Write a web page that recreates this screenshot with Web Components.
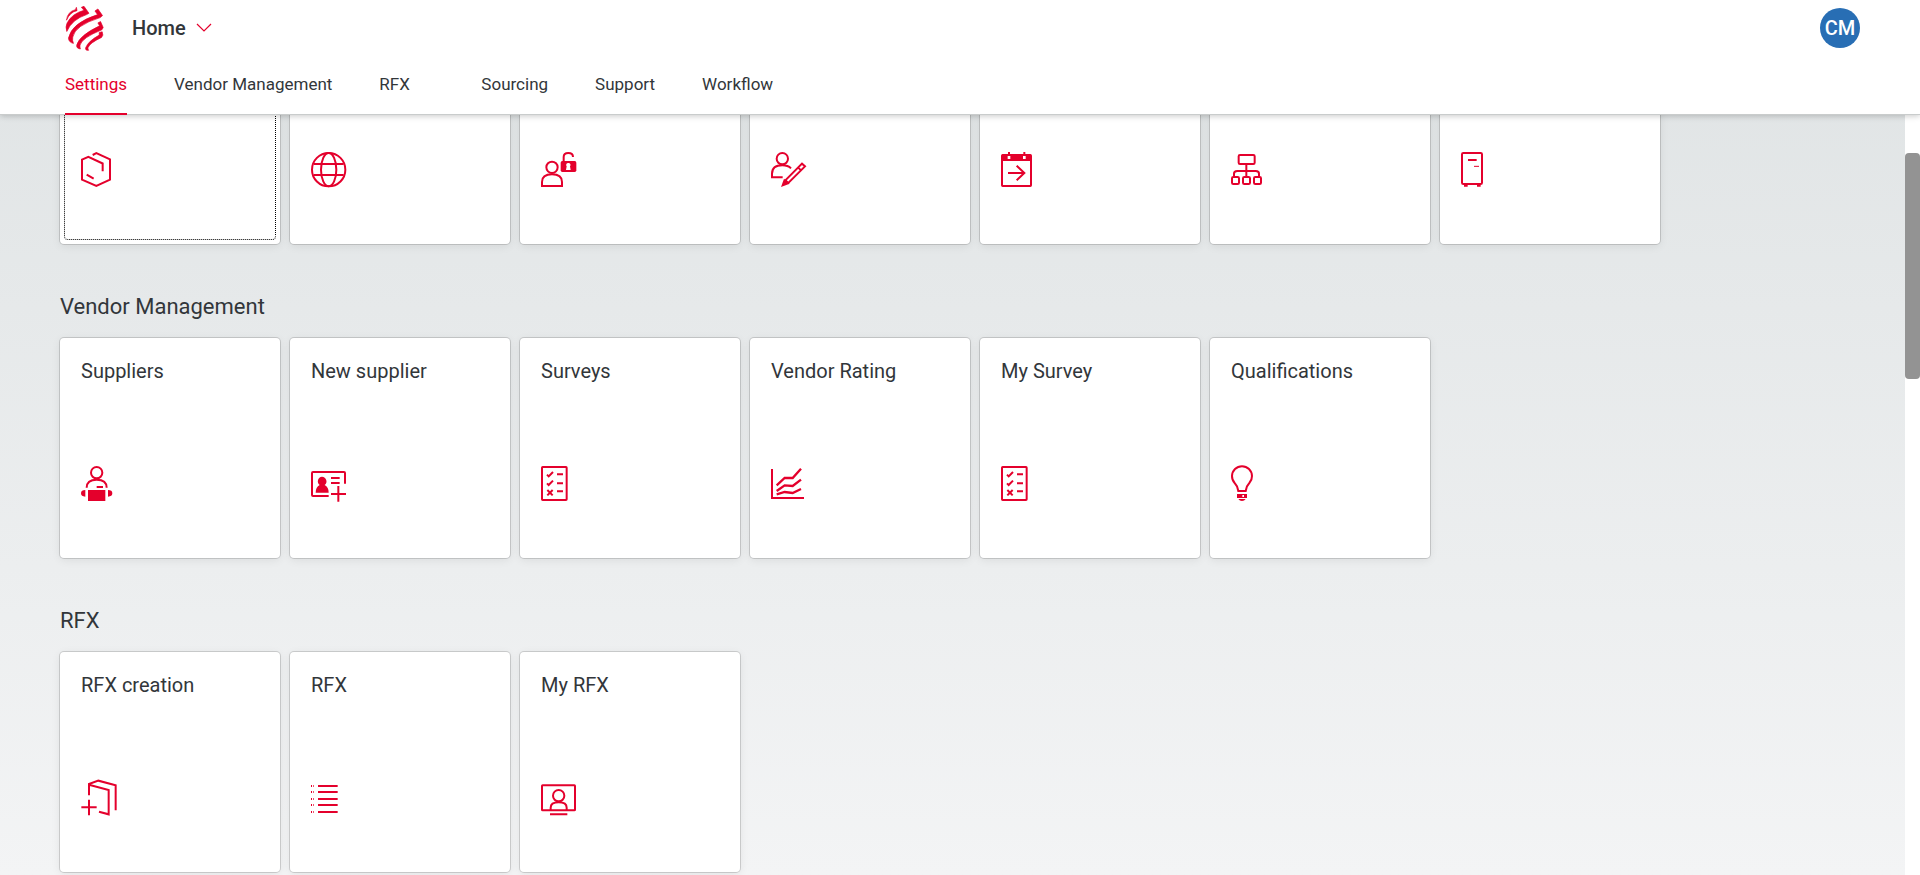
<!DOCTYPE html>
<html lang="en">
<head>
<meta charset="utf-8">
<title>Home</title>
<style>
  html, body { margin: 0; height: 100%; }
  body { font-family: Roboto, "Liberation Sans", sans-serif; color: #32363a; --brand: #e4002c; }
</style>
</head>
<body>
<launch-page></launch-page>

<script>
const define = (name, html, setup) => {
  const template = document.createElement('template');
  template.innerHTML = html;
  customElements.define(name, class extends HTMLElement {
    constructor() {
      super();
      this.attachShadow({ mode: 'open' }).append(template.content.cloneNode(true));
    }
    connectedCallback() { if (setup) setup(this, this.shadowRoot); }
  });
};

// Icons share a 105-unit square; strokes default to the brand colour.
const person = (x, y) => `<circle cx="${x}" cy="${y}" r="17"/>`;
const checklist = `<rect x="3" y="3" width="74" height="99" rx="2"/>
  <path d="M18 26l5 5L36 18M18 52l5 5L36 44M19 72l16 16M35 72L19 88M48 25h18M48 52h18M48 76h18"/>`;
const icons = {
  product: `<path d="M35 9L46 3.500l41 18.500v61L46 102 3 83V23l19-8.500 43 20V58M17 68l21 12"/>`,
  globe: `<circle cx="53" cy="53" r="50"/><ellipse cx="53" cy="53" rx="23" ry="50"/><path d="M8 36h90M8 69h90"/>`,
  unlock: `${person(33, 46)}<path d="M3 102V90q0-23 30-23t30 23v12z"/><path d="M68 28V15q0-12 14-12t14 12"/>
    <rect x="59" y="27" width="47" height="33" rx="5" fill="currentColor" stroke="none"/>
    <path d="M82 33a6 6 0 0 1 5 10l2 11H75l2-11a6 6 0 0 1 5-10z" fill="#fff" stroke="none"/>`,
  personEdit: `${person(34, 20)}<path d="M60 49Q51 40 34 40 3 40 3 65v11h32M43 85l50-50 9 8-50 50zM81 46l9 9"/>
    <path d="M39 80l17 15-26 10z" fill="currentColor" stroke="none"/>`,
  calendar: `<rect x="3" y="9" width="87" height="93" rx="2"/>
    <path d="M3 8h87v19H3z" fill="currentColor" stroke="none"/>
    <path d="M20 12h8v9h-8zM66 12h8v9h-8z" fill="#fff" stroke="none"/>
    <path d="M24 0v12M70 0v12M21 63h48M47 41l23 22-23 22"/>`,
  hierarchy: `<rect x="23" y="9" width="48" height="27" rx="4"/><path d="M46 36v36M9 72V65q0-8 10-8h55q10 0 10 8v7"/>
    <rect x="3" y="75" width="21" height="21" rx="4"/><rect x="36" y="75" width="21" height="21" rx="4"/><rect x="69" y="75" width="21" height="21" rx="4"/>`,
  cabinet: `<rect x="3" y="3" width="60" height="93" rx="4"/><path d="M21 24h26M9 101h11M48 101h11"/><path d="M39 43h15" stroke-width="3"/>`,
  supplier: `${person(47, 20)}<path d="M17 65Q17 41 47 41t30 24M47 63h19"/>
    <path d="M21 72h52v33H21zM13 72v20Q0 92 0 82t13-10zM81 72v20q13 0 13-10T81 72z" fill="currentColor" stroke="none"/>`,
  addContact: `<path d="M53 90H6q-3 0-3-3V21q0-3 3-3h93q3 0 3 3v32M60 36h26M60 51h26M60 84h45M82 60v47"/>
    <path d="M33 32a14 14 0 0 1 8 25q12 6 12 23H14q0-17 12-23a14 14 0 0 1 7-25z" fill="currentColor" stroke="none"/>`,
  checklist,
  chart: `<path d="M3 9v87h96"/><path d="M17 58l24-22h24l25-28M17 75l24-17 24 2 25-19M17 85l24-7 24 3 25-12" stroke-width="7"/>`,
  bulb: `<path d="M22 75Q20 60 11 51A30 30 0 1 1 55 51Q46 60 44 75z"/>
    <path d="M18 84h30v12H18zM22 99h22q-4 6-11 6t-11-6z" fill="currentColor" stroke="none"/>
    <path d="M34 87h5v6h-5z" fill="#fff" stroke="none"/>`,
  addProduct: `<path d="M24 46V12l28-10 52 14v75M24 14l59 16v73l-29-8M1 82h46M24 59v47"/>`,
  list: `<path d="M21 18h59M21 36h59M21 57h59M21 75h59M21 96h59M0 18h3M6 18h2M0 36h3M6 36h2M0 57h3M6 57h2M0 75h3M6 75h2M0 96h3M6 96h2"/>`,
  monitor: `<rect x="3" y="16" width="99" height="75" rx="2"/><circle cx="53" cy="47" r="17"/>
    <path d="M29 90V83q0-16 24-16t24 16v7M27 103h52"/>`
};

define('brand-logo', `
  <style>
    :host { display: block; width: 39px; height: 45px; color: var(--brand); }
    svg { display: block; width: 100%; height: 100%; }
  </style>
  <svg viewBox="45 17 117 136" fill="currentColor" stroke="currentColor" stroke-width="2" stroke-linejoin="round" aria-hidden="true">
    <path d="M49 60Q52 34 76 28L79 21 81 31Q60 35 49 60Z"/>
    <path d="M50 94Q45 80 51 68Q66 40 102 30L94 21 102 18 117 39 110 43Q66 57 50 94Z"/>
    <path d="M70 130Q56 127 55 114Q65 68 143 43L135 32 144 26 158 46 151 52Q74 76 68 111Q66 121 70 130Z"/>
    <path d="M91 147Q78 145 80 135Q88 106 149 77L144 68 152 64 160 82 156 89Q96 113 90 135Q89 141 91 147Z"/>
    <path d="M116 151Q105 152 107 143Q115 123 148 105L148 97 157 95 159 105 155 112Q119 129 114 143Q113 147 116 151Z"/>
  </svg>`);

define('page-header', `
  <style>
    :host { display: block; position: relative; z-index: 1; background: #fff; border-bottom: 1px solid #c9cccc; box-shadow: 0 1px 6px rgba(0,0,0,.22); }
    .bar { display: flex; align-items: center; height: 56px; padding: 0 60px 0 65px; }
    .home { display: flex; align-items: center; gap: 10px; margin-left: 28px; padding: 0; border: 0; background: none; font: 500 20px/24px Roboto, sans-serif; color: inherit; }
    .home svg { width: 16px; height: 10px; color: var(--brand); }
    .avatar { margin-left: auto; width: 40px; height: 40px; padding: 0; border: 0; border-radius: 50%; background: #286eb4; color: #fff; font: 500 20px/40px Roboto, sans-serif; }
    nav { display: flex; gap: 47px; padding: 0 65px; }
    a { box-sizing: border-box; height: 58px; min-width: 55px; color: inherit; text-decoration: none; font-size: 17px; line-height: 56px; }
    a[aria-current] { color: var(--brand); margin-bottom: -1px; height: 59px; border-bottom: 2px solid var(--brand); }
  </style>
  <div class="bar">
    <brand-logo></brand-logo>
    <button class="home">Home
      <svg viewBox="0 0 16 10" fill="none" stroke="currentColor" stroke-width="1.2" aria-hidden="true"><path d="M1 1l7 7 7-7"/></svg>
    </button>
    <button class="avatar">CM</button>
  </div>
  <nav>
    <a href="#settings" aria-current="true">Settings</a>
    <a href="#vendor">Vendor Management</a>
    <a href="#rfx">RFX</a>
    <a href="#sourcing">Sourcing</a>
    <a href="#support">Support</a>
    <a href="#workflow">Workflow</a>
  </nav>`);

define('app-tile', `
  <style>
    :host { display: block; }
    a { position: relative; box-sizing: border-box; display: flex; flex-direction: column; justify-content: space-between; width: 220px; height: 220px; padding: 21px 21px 57px; border-radius: 4px; background: #fff; color: inherit; text-decoration: none; box-shadow: 0 0 0 1px rgba(0,0,0,.14), 0 2px 10px rgba(0,0,0,.08); }
    :host([focused]) a::after { content: ""; position: absolute; inset: 4px; border: 1px dotted #000; border-radius: 4px; }
    h3 { margin: 0; font-weight: 400; font-size: 20px; line-height: 24px; }
    svg { width: 35px; height: 35px; overflow: visible; color: var(--brand); }
  </style>
  <a href="#"><h3><slot></slot></h3><svg viewBox="0 0 105 105" fill="none" stroke="currentColor" stroke-width="6" aria-hidden="true"></svg></a>`,
  (host, root) => {
    root.querySelector('svg').innerHTML = icons[host.getAttribute('icon')] || '';
    if (host.hasAttribute('label')) root.querySelector('a').setAttribute('aria-label', host.getAttribute('label'));
  });

define('tile-group', `
  <style>
    :host { display: block; }
    h2 { margin: 0 0 16px; font-weight: 400; font-size: 22px; line-height: 30px; }
    h2:empty { display: none; }
    .tiles { display: flex; flex-wrap: wrap; gap: 10px; }
  </style>
  <h2></h2><div class="tiles"><slot></slot></div>`,
  (host, root) => { root.querySelector('h2').textContent = host.getAttribute('heading') || ''; });

define('scroll-area', `
  <style>
    :host { display: flex; flex: 1; min-height: 0; }
    .view { flex: 1; overflow-y: auto; scrollbar-width: none; }
    .content { display: flex; flex-direction: column; gap: 48px; padding: 37px 60px 1670px; }
    .track { flex: none; width: 15px; background: #fff; }
    .thumb { border-radius: 4px; background: #939393; }
  </style>
  <div class="view"><div class="content"><slot></slot></div></div>
  <div class="track"><div class="thumb"></div></div>`,
  (host, root) => {
    const view = root.querySelector('.view'), thumb = root.querySelector('.thumb');
    const update = () => {
      const ratio = view.clientHeight / view.scrollHeight;
      thumb.style.height = Math.round(view.clientHeight * ratio) + 'px';
      thumb.style.transform = `translateY(${Math.round(view.scrollTop * ratio)}px)`;
    };
    view.addEventListener('scroll', update);
    new ResizeObserver(update).observe(view);
    host.scrollToStart = top => { view.scrollTop = top; update(); };
  });

define('launch-page', `
  <style>
    :host { display: flex; flex-direction: column; height: 100vh; overflow: hidden; background: linear-gradient(#dfe3e4, #f3f4f5); }
  </style>
  <page-header></page-header>
  <scroll-area>
    <tile-group>
      <app-tile icon="product" label="Products" focused></app-tile>
      <app-tile icon="globe" label="Countries"></app-tile>
      <app-tile icon="unlock" label="Access"></app-tile>
      <app-tile icon="personEdit" label="Users"></app-tile>
      <app-tile icon="calendar" label="Calendar"></app-tile>
      <app-tile icon="hierarchy" label="Organization"></app-tile>
      <app-tile icon="cabinet" label="Storage"></app-tile>
    </tile-group>
    <tile-group heading="Vendor Management">
      <app-tile icon="supplier">Suppliers</app-tile>
      <app-tile icon="addContact">New supplier</app-tile>
      <app-tile icon="checklist">Surveys</app-tile>
      <app-tile icon="chart">Vendor Rating</app-tile>
      <app-tile icon="checklist">My Survey</app-tile>
      <app-tile icon="bulb">Qualifications</app-tile>
    </tile-group>
    <tile-group heading="RFX">
      <app-tile icon="addProduct">RFX creation</app-tile>
      <app-tile icon="list">RFX</app-tile>
      <app-tile icon="monitor">My RFX</app-tile>
    </tile-group>
  </scroll-area>`,
  (host, root) => root.querySelector('scroll-area').scrollToStart(128));
</script>
</body>
</html>
